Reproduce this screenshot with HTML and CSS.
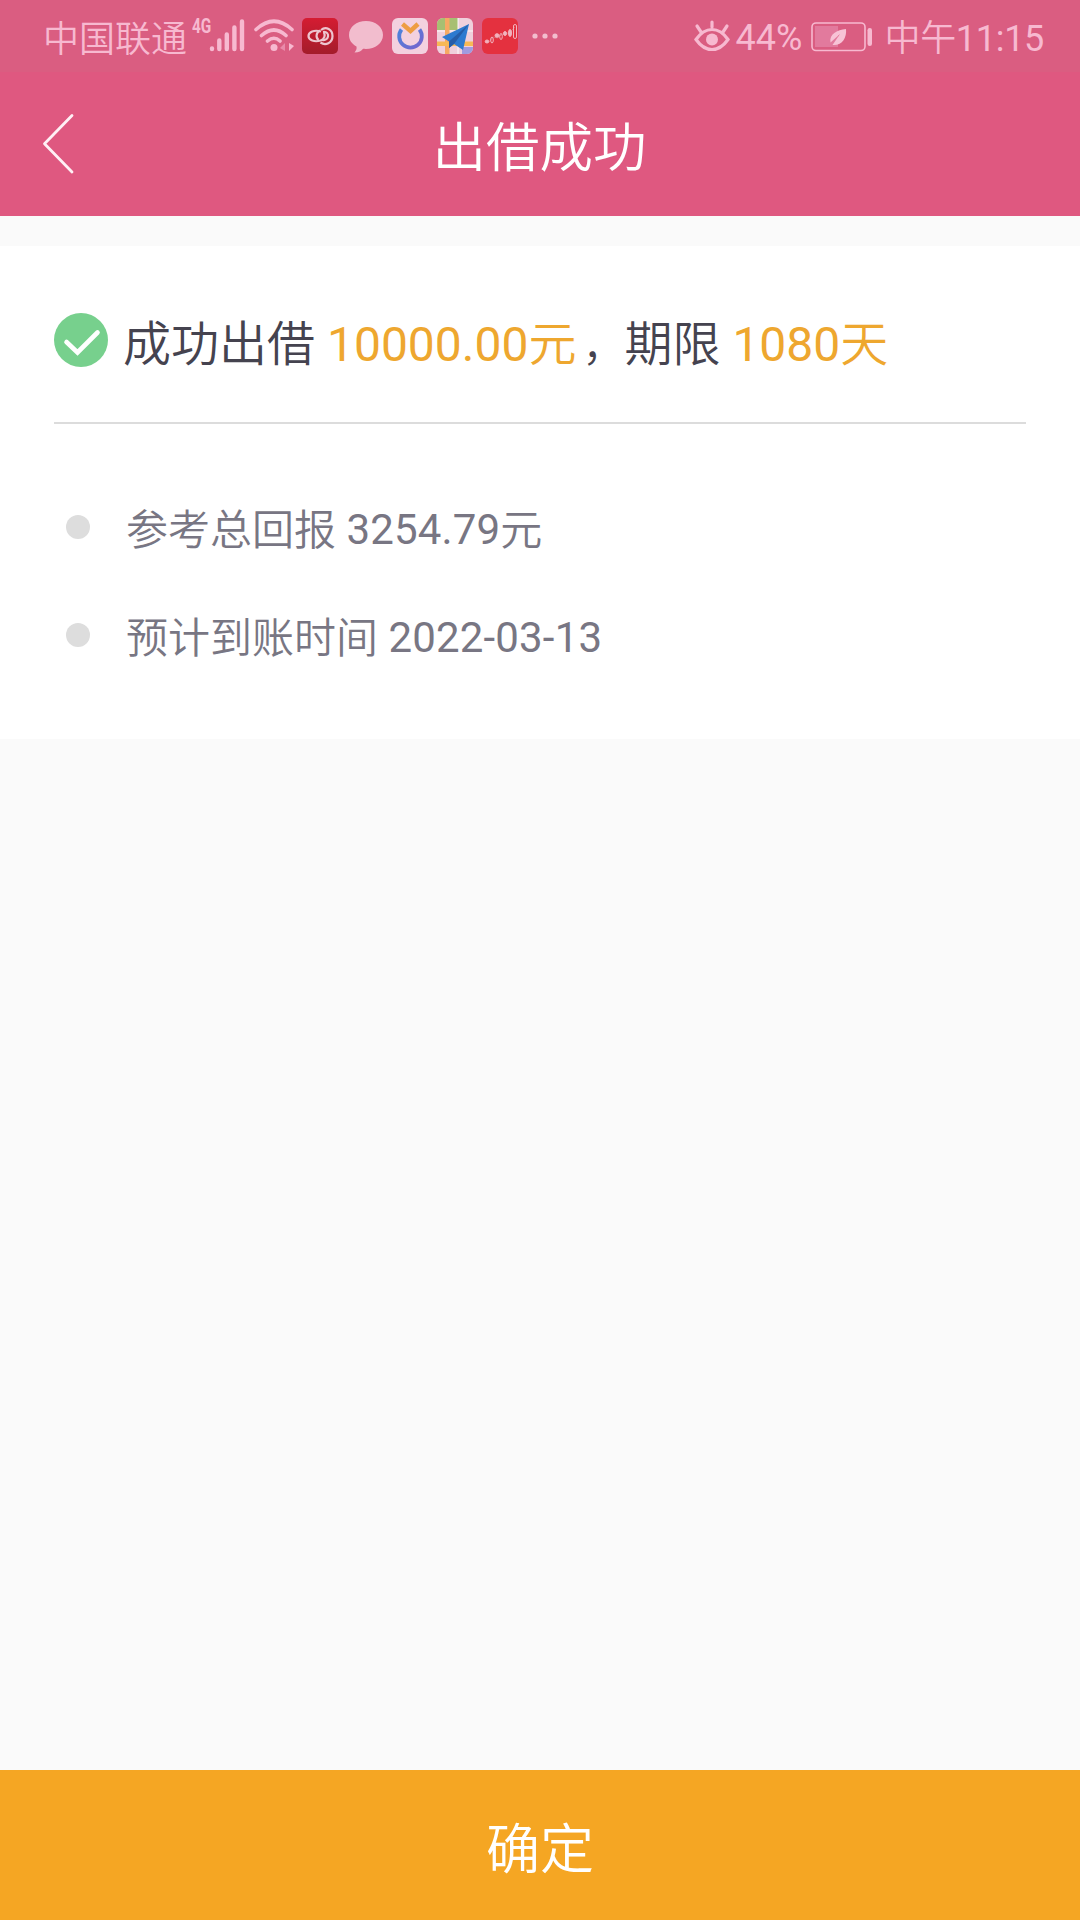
FILE: index.html
```html
<!DOCTYPE html>
<html lang="zh-CN">
<head>
    <meta charset="UTF-8">
    <meta name="viewport" content="width=device-width, initial-scale=1.0">
    <title>出借成功</title>
    <link rel="stylesheet" href="styles.css">
</head>
<body>
    <div class="status-bar">
        <div class="status-left">
            <span class="carrier">中国联通</span>
            <span class="network">4G</span>
            <svg class="signal" width="36" height="34" viewBox="0 0 36 34" stroke="#f7b9d0" stroke-width="4.4" stroke-linecap="round">
                <path d="M3 30v-.5M10.3 30v-8.500M17.800 30V15.500M25.400 30V8.500M33 30V2.500"/>
            </svg>
            <svg class="wifi" width="40" height="34" viewBox="0 0 40 34" fill="none" stroke="#f7b9d0" stroke-width="3.600" stroke-linecap="round">
                <path d="M2 10.500Q20-6 38 10.500M7.500 16.500Q20 5.500 32 16.500M13.500 22Q20 16.500 26 22"/>
                <circle cx="20" cy="28.500" r="3.500" fill="#f7b9d0" stroke="none"/>
                <path d="M26 29l5-5v8z" fill="#e98aaa" stroke="none"/>
                <path d="M35 24v8l5-5z" fill="#f7b9d0" stroke="none"/>
            </svg>
            <svg class="app app-rings" width="36" height="36" viewBox="0 0 36 36">
                <defs>
                    <linearGradient id="red" x2="0" y2="1">
                        <stop stop-color="#d51c32"/>
                        <stop offset="1" stop-color="#a31c2b"/>
                    </linearGradient>
                </defs>
                <rect width="36" height="36" rx="5" fill="url(#red)"/>
                <g fill="none" stroke="#edc5cf" stroke-width="2.200">
                    <path d="M19 13.500C12 11.500 6.500 14 6.500 18s6 6.500 12 4.500c4-1.500 5-5 3.500-8"/>
                    <path d="M18 12.500c-4 2-4.500 7-1.500 9.500"/>
                    <path d="M19 12c5-4 11.500-.5 11.500 6 0 7-7 10-12 6.500"/>
                    <path d="M21 14c4-.5 5.500 2 5 4.500s-3 4-6 3.500"/>
                </g>
            </svg>
            <svg class="bubble" width="34" height="34" viewBox="0 0 34 34" fill="#f2bdce">
                <path d="M17 1C7.500 1 0 7 0 15c0 5 2.800 9 7.500 11.500.5 2.500-.5 4-2 6 4.500 0 7-1.500 8.500-3.700 11 1.200 20-5 20-13.800C34 7 26.500 1 17 1z"/>
            </svg>
            <svg class="app app-ring" width="36" height="36" viewBox="0 0 36 36" fill="none">
                <defs>
                    <linearGradient id="blue" x2="1" y2="1">
                        <stop stop-color="#4b84dc"/>
                        <stop offset="1" stop-color="#7664cd"/>
                    </linearGradient>
                </defs>
                <rect width="36" height="36" rx="6" fill="#f3d1df"/>
                <path d="M9.500 11.500A11.300 11.300 0 1 0 27.500 11.500" stroke="url(#blue)" stroke-width="3.800"/>
                <path d="M10.500 6l8 7 7.500-7" stroke="#ee9d42" stroke-width="4.500"/>
            </svg>
            <svg class="app app-map" width="36" height="36" viewBox="0 0 36 36">
                <clipPath id="tile"><rect width="36" height="36" rx="6"/></clipPath>
                <g clip-path="url(#tile)">
                    <path fill="#efd0dc" d="M0 0h36v36H0z"/>
                    <path fill="#a7bf72" d="M0 0h21v12H0z"/>
                    <path fill="#fff" opacity=".45" d="M20 0h2v36h-2zM0 12h36v2H0z"/>
                    <path fill="#a09be0" d="M25 29h11v7H25z"/>
                    <path fill="#f6a963" d="M8 0h4.500v36H8z"/>
                    <path fill="#f7b955" d="M0 23.500h36v4.500H0z"/>
                    <path fill="#2d7ad0" d="M32 6L5 19l7 4.500V30l5-4 9 6z"/>
                    <path fill="#265da8" d="M32 6L12 23.500V30l5-4z"/>
                </g>
            </svg>
            <svg class="app app-chart" width="36" height="36" viewBox="0 0 36 36">
                <rect width="36" height="36" rx="6" fill="#e4313f"/>
                <g fill="#f2b3bd" stroke="#f2b3bd" stroke-width="1">
                    <path fill="none" stroke="#d8626d" d="M3 24l5-1 3-4 5 1 4-4 7-1 6-6"/>
                    <ellipse cx="5" cy="23.500" rx="1.800" ry="1.500"/>
                    <ellipse cx="10" cy="22" rx="1.300" ry="3" fill="none"/>
                    <ellipse cx="15" cy="17.500" rx="2" ry="1.800"/>
                    <ellipse cx="19" cy="18.500" rx="1.300" ry="3" fill="none"/>
                    <ellipse cx="23" cy="15.500" rx="1.500" ry="2"/>
                    <ellipse cx="28" cy="15" rx="1.500" ry="3.500"/>
                    <rect x="31.500" y="6.500" width="3" height="14" rx="1.500" fill="none"/>
                </g>
            </svg>
            <svg class="more" width="26" height="6" viewBox="0 0 26 6" fill="#f2bdce">
                <circle cx="3" cy="3" r="2.600"/>
                <circle cx="13" cy="3" r="2.600"/>
                <circle cx="23" cy="3" r="2.600"/>
            </svg>
        </div>
        <div class="status-right">
            <svg class="eye" width="36" height="32" viewBox="0 0 36 32" fill="none" stroke="#f7b9d0" stroke-width="3.200" stroke-linecap="round">
                <path d="M2 19.500Q9 9.500 18 9.500T34 19.500Q27 29.500 18 29.500T2 19.500z"/>
                <path d="M18 2v5M3 6l4 6M33 6l-4 6"/>
                <circle cx="18" cy="19.500" r="6" fill="#f7b9d0" stroke="none"/>
            </svg>
            <span class="percent">44%</span>
            <svg class="battery" width="62" height="30" viewBox="0 0 62 30">
                <rect x="1" y="1" width="53" height="27.500" rx="4" fill="none" stroke="#f7b9d0" stroke-width="1.600"/>
                <path fill="#e27a9d" d="M4 4h23v21H4z"/>
                <path fill="#f7c3d6" d="M35 7c-9 1-17 5-15.500 13.500L29 12l-7.500 11C31 24 36 16 35 7z"/>
                <rect x="56.500" y="6" width="4.500" height="18" rx="2.200" fill="#f7b9d0"/>
            </svg>
            <span class="clock"><span class="cn">中午</span>11:15</span>
        </div>
    </div>

    <div class="header">
        <svg class="back" width="34" height="62" viewBox="0 0 34 62" fill="none" stroke="#fff0f5" stroke-width="2.800" stroke-linecap="round" stroke-linejoin="round">
            <path d="M30 2.500L2.500 30.800 30 59"/>
        </svg>
        <h1>出借成功</h1>
    </div>

    <div class="card">
        <div class="result">
            <svg class="check" width="54" height="54" viewBox="0 0 54 54">
                <circle cx="27" cy="27" r="27" fill="#77d08d"/>
                <path d="M12.500 29l11 10.500L43.500 19.500" fill="none" stroke="#fff" stroke-width="4.600" stroke-linecap="round"/>
            </svg>
            <p><span class="cn">成功出借</span> <span class="amount">10000.00<span class="cn">元</span></span><span class="cn"><span class="comma">，</span>期限</span> <span class="amount">1080<span class="cn">天</span></span></p>
        </div>
        <ul class="details">
            <li><span class="cn">参考总回报</span><span class="num"> 3254.79</span><span class="cn">元</span></li>
            <li><span class="cn">预计到账时间</span><span class="num"> 2022-03-13</span></li>
        </ul>
    </div>

    <button class="confirm">确定</button>
</body>
</html>
```

FILE: styles.css
```css
* {
    box-sizing: border-box;
    margin: 0;
    padding: 0;
}
body {
    display: flex;
    flex-direction: column;
    height: 1920px;
    background-color: #fafafa;
    font-family: Roboto, "Noto Sans CJK SC", sans-serif;
}
svg {
    display: block;
    flex-shrink: 0;
}
.cn, .carrier, .header h1, .confirm {
    font-family: "Noto Sans CJK SC", sans-serif;
    font-weight: 350;
}

/* status bar */
.status-bar {
    display: flex;
    justify-content: space-between;
    height: 72px;
    padding: 0 36px 0 43px;
    background-color: #da5d81;
    color: #f7b9d0;
    font-size: 36px;
    line-height: 72px;
    white-space: nowrap;
}
.status-left, .status-right {
    display: flex;
    align-items: center;
}
.network {
    margin: -20px 0 0 5px;
    font-size: 20px;
    font-weight: 700;
    line-height: 20px;
    transform: scaleX(0.77);
    transform-origin: left;
    width: 18px;
}
.signal {
    margin-left: -1px;
}
.wifi {
    margin-left: 9px;
}
.app-rings {
    margin-left: 8px;
}
.bubble {
    margin: 2px 0 0 11px;
}
.app-ring {
    margin-left: 9px;
}
.app-map, .app-chart {
    margin-left: 9px;
}
.more {
    margin-left: 14px;
}
.percent {
    margin: 3px 0 0 6px;
}
.battery {
    margin: 2px 0 0 9px;
}
.clock {
    margin: 1px 0 0 11px;
    letter-spacing: -0.3px;
}

/* title bar */
.header {
    display: flex;
    align-items: center;
    height: 144px;
    padding: 0 77px 0 42px;
    background-color: #df5880;
    color: #fff;
}
.header h1 {
    flex: 1;
    font-size: 53.5px;
    line-height: 80px;
    text-align: center;
}

/* result card */
.card {
    height: 493px;
    margin-top: 30px;
    padding: 0 54px;
    background-color: #fff;
}
.result {
    display: flex;
    align-items: center;
    height: 178px;
    border-bottom: 2px solid #dcdcdc;
    padding-top: 12px;
    color: #45434f;
    font-size: 48px;
    line-height: 72px;
    white-space: nowrap;
}
.result p {
    margin-left: 15px;
    padding-top: 4px;
}
.comma {
    margin-left: 6px;
    font-size: 42px;
}
.amount {
    color: #eea72f;
}
.details {
    padding-top: 49px;
    list-style: none;
    color: #787683;
    font-size: 42px;
}
.details li {
    display: flex;
    align-items: center;
    height: 108px;
    padding-left: 12px;
    line-height: 60px;
    white-space: pre;
}
.details li::before {
    content: "";
    width: 24px;
    height: 24px;
    margin-right: 36px;
    border-radius: 50%;
    background-color: #ddd;
}
.num {
    padding-top: 5px;
    letter-spacing: 0.15px;
}

.confirm {
    height: 150px;
    margin-top: auto;
    border: none;
    background-color: #f5a623;
    color: #fff;
    font-size: 54px;
}
```
